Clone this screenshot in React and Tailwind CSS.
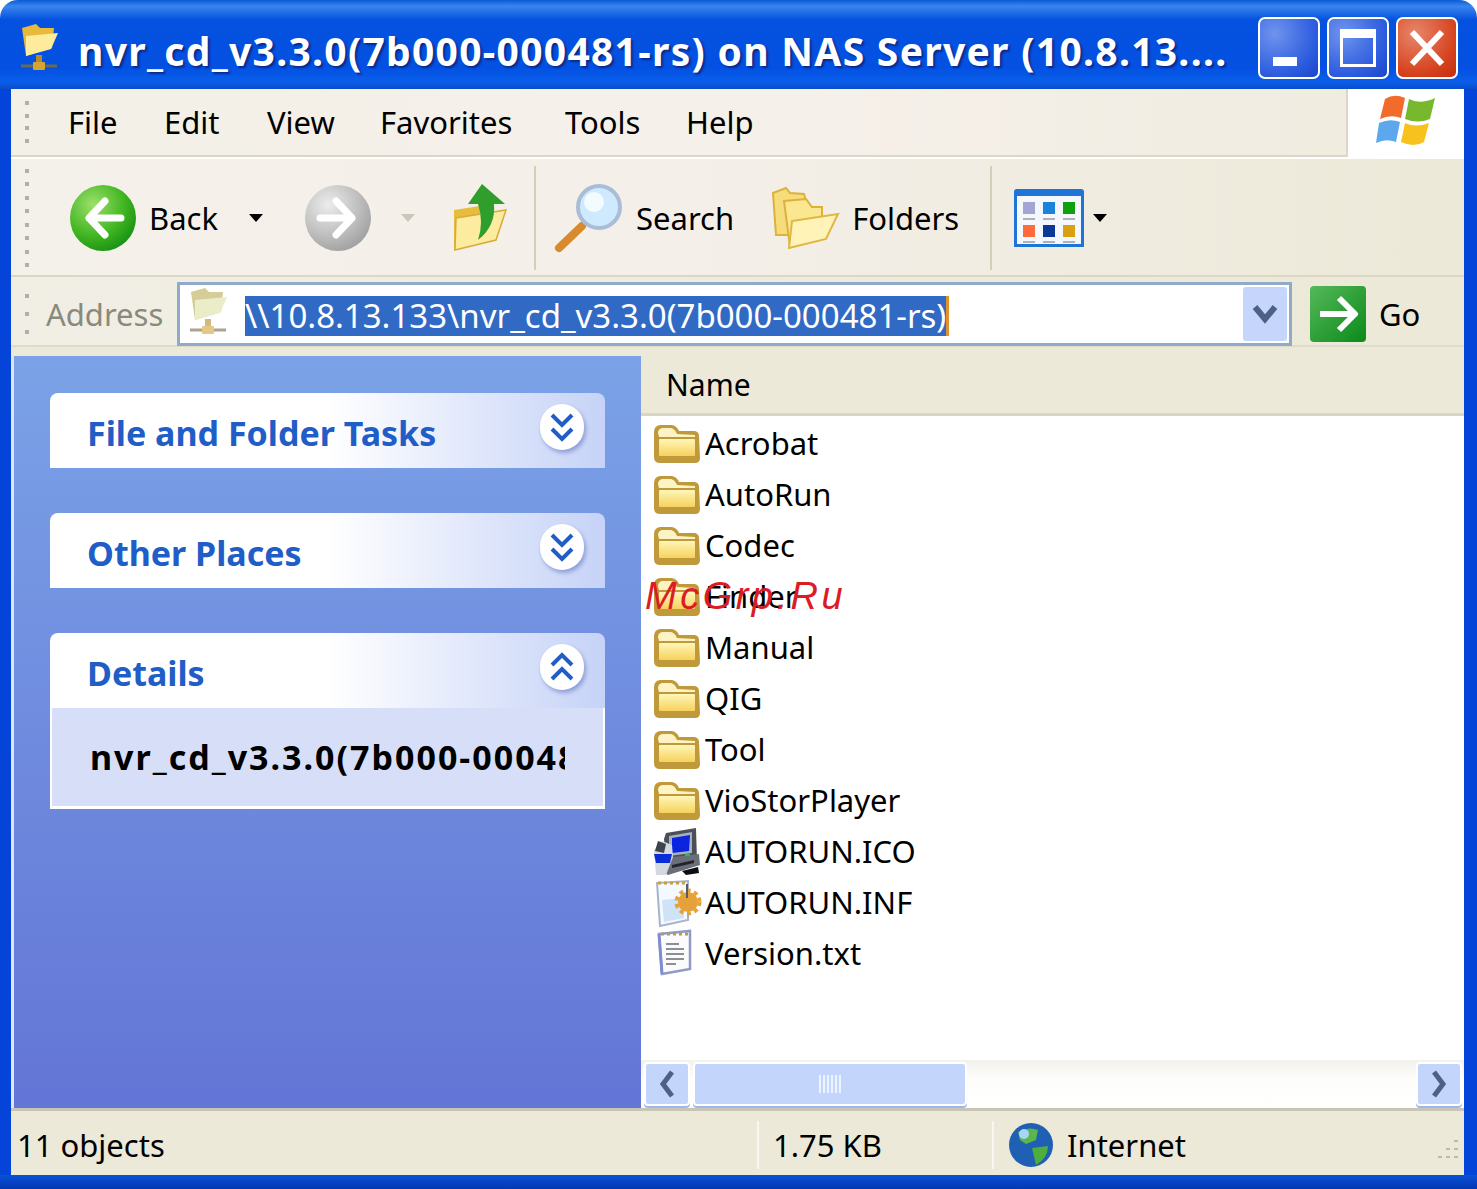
import React from 'react';

const files = ['Acrobat', 'AutoRun', 'Codec', 'Finder', 'Manual', 'QIG', 'Tool', 'VioStorPlayer'];

const menus = [
  { label: 'File', width: 'w-[96px]' },
  { label: 'Edit', width: 'w-[103px]' },
  { label: 'View', width: 'w-[113px]' },
  { label: 'Favorites', width: 'w-[185px]' },
  { label: 'Tools', width: 'w-[121px]' },
  { label: 'Help', width: 'w-[80px]' },
];

function FolderIcon() {
  return (
    <svg width="50" height="44" viewBox="0 0 50 44" className="shrink-0">
      <defs>
        <linearGradient id="fld" x1="0" y1="0" x2="0" y2="1">
          <stop offset="0" stopColor="#fff6b8" />
          <stop offset="1" stopColor="#f6d25c" />
        </linearGradient>
      </defs>
      <path d="M2 10 Q2 4 8 3 L20 3 Q25 4 27 9 L43 9 Q47 10 47 14 L48 36 Q48 41 43 41 L8 41 Q2 41 2 35 Z" fill="#c09a3a" />
      <path d="M6 11 Q6 7 10 6 L19 6 Q23 7 25 12 L43 13 L43 15 L7 15 Z" fill="#fdf3c4" />
      <rect x="7" y="17" width="36" height="17" rx="1" fill="url(#fld)" />
    </svg>
  );
}

function ComputerIcon() {
  return (
    <svg width="50" height="50" viewBox="0 0 50 50" className="shrink-0">
      <path d="M12 12 L14 6 L44 1 L45 34 L14 36 Z" fill="#4b4f58" />
      <path d="M17 9 L40 5 L40 26 L17 29 Z" fill="#a7b0bd" />
      <path d="M20 11 L38 8 L37 24 L20 26 Z" fill="#0a24e0" />
      <path d="M12 31 L47 27 L48 38 L16 48 L10 44 Z" fill="#6a6e76" />
      <path d="M20 38 L42 33 L42 36 L20 41 Z" fill="#22252c" />
      <rect x="33" y="27" width="5" height="2" fill="#21c04a" />
      <path d="M2 23 L10 14 L20 18 L21 30 L14 48 L4 48 Z" fill="#d5d8de" />
      <path d="M2 27 L20 27 L18 36 L4 36 Z" fill="#0b2bd8" />
      <path d="M6 14 L14 17 L12 26 L3 24 Z" fill="#3f434c" />
      <path d="M30 44 L46 40 L47 46 L34 48 Z" fill="#0c0e14" />
    </svg>
  );
}

function InfIcon() {
  return (
    <svg width="50" height="50" viewBox="0 0 50 50" className="shrink-0">
      <path d="M5 5 L36 3 L36 42 L8 48 Z" fill="#f4f8ff" stroke="#a7b3cf" strokeWidth="2" />
      <path d="M10 22 L32 20 L32 40 L12 44 Z" fill="#cfe3f7" />
      <path d="M6 5 H34" stroke="#c5a13f" strokeWidth="3" strokeDasharray="3 3" />
      <circle cx="36" cy="24" r="10" fill="#e6a23a" />
      <circle cx="36" cy="24" r="11.5" fill="none" stroke="#e6a23a" strokeWidth="4" strokeDasharray="4 3.5" />
      <path d="M35 6 V20" stroke="#565b64" strokeWidth="2" />
    </svg>
  );
}

function TxtIcon() {
  return (
    <svg width="50" height="50" viewBox="0 0 50 50" className="shrink-0">
      <path d="M7 5 L38 2 L38 40 L10 45 Z" fill="#fbfbfb" stroke="#8f9ac8" strokeWidth="2.5" />
      <path d="M7 5 L10 45" stroke="#7f8dd0" strokeWidth="3" />
      <path d="M9 5 H36" stroke="#b39a55" strokeWidth="3" strokeDasharray="3 3" />
      <path d="M14 15 H27 M14 20 H32 M14 25 H32 M14 30 H32 M14 35 H24" stroke="#8b8f96" strokeWidth="2" />
    </svg>
  );
}

function NetFolderIcon({ faded }) {
  return (
    <svg width="42" height="52" viewBox="0 0 42 52" className={faded ? 'opacity-60' : ''}>
      <path d="M4 6 L18 2 L22 6 L36 6 L34 26 L8 34 Z" fill={faded ? '#b9ad55' : '#e9b93a'} />
      <path d="M8 14 L40 11 L33 27 L8 34 Z" fill={faded ? '#dfe0a5' : '#ffeb9c'} />
      <rect x="18" y="33" width="6" height="9" fill="#b58b2e" />
      <path d="M3 44 H39" stroke="#6f6a4a" strokeWidth="3" />
      <rect x="15" y="40" width="12" height="8" rx="1" fill="#d5a534" />
    </svg>
  );
}

function RoundArrow({ dir, gray }) {
  return (
    <svg width="68" height="68" viewBox="0 0 68 68">
      <defs>
        <radialGradient id={gray ? 'ga' : 'gg'} cx="0.35" cy="0.3" r="0.8">
          <stop offset="0" stopColor={gray ? '#ececec' : '#9de06a'} />
          <stop offset="0.6" stopColor={gray ? '#bdbdbd' : '#3fb521'} />
          <stop offset="1" stopColor={gray ? '#9b9b9b' : '#138a12'} />
        </radialGradient>
      </defs>
      <circle cx="34" cy="34" r="33" fill={`url(#${gray ? 'ga' : 'gg'})`} />
      <path
        d={dir === 'left' ? 'M36 17 L20 34 L36 51 M20 34 H52' : 'M32 17 L48 34 L32 51 M48 34 H16'}
        fill="none"
        stroke="#fff"
        strokeWidth="7"
        strokeLinecap="round"
        strokeLinejoin="round"
      />
    </svg>
  );
}

function UpIcon() {
  return (
    <svg width="60" height="70" viewBox="0 0 60 70">
      <path d="M4 28 L30 24 L30 60 L4 68 Z" fill="#e8bd3f" />
      <path d="M6 36 L56 28 L46 58 L5 68 Z" fill="#fdeb9f" stroke="#d7ac37" strokeWidth="1.5" />
      <path d="M32 2 L55 22 L44 22 Q46 44 28 58 Q34 40 28 22 L18 22 Z" fill="#2f9e2c" />
    </svg>
  );
}

function SearchIcon() {
  return (
    <svg width="72" height="72" viewBox="0 0 72 72">
      <path d="M5 66 L28 44" stroke="#d88a2c" strokeWidth="8" strokeLinecap="round" />
      <circle cx="45" cy="25" r="21" fill="#cfeaff" stroke="#a9bdd6" strokeWidth="4" />
      <circle cx="40" cy="20" r="10" fill="#f3fbff" />
    </svg>
  );
}

function FoldersIcon() {
  return (
    <svg width="68" height="62" viewBox="0 0 68 62">
      <path d="M1 6 L14 1 L18 6 L32 7 L34 14 L34 48 L4 48 Z" fill="#f7dc7c" stroke="#dcb13c" strokeWidth="2" />
      <path d="M12 14 L34 12 L40 20 L50 20 L50 44 L18 60 Z" fill="#fbe78f" stroke="#dcb13c" strokeWidth="2" />
      <path d="M20 34 L66 27 L54 52 L17 61 Z" fill="#fff3b8" stroke="#dfb744" strokeWidth="2" />
    </svg>
  );
}

function ViewsIcon() {
  const dots = ['#a5a4d6', '#1a84dc', '#0ea00e', '#ff6a3a', '#0b3a96', '#d9a012'];
  return (
    <div className="w-[70px] h-[58px] bg-[#f4f8fd] border-[3px] border-[#1f74d8] border-t-[7px] rounded-t-[3px] grid grid-cols-3 gap-x-[8px] gap-y-[5px] px-[6px] py-[6px]">
      {dots.map((c, i) => (
        <div key={i} className="flex flex-col gap-[4px] items-center">
          <svg width="12" height="12" viewBox="0 0 12 12">
            <rect width="12" height="12" fill={c} />
          </svg>
          <div className="w-[12px] h-[2px] bg-[#aeb2b8]" />
        </div>
      ))}
    </div>
  );
}

function Caret({ light }) {
  return (
    <svg width="16" height="10" viewBox="0 0 16 10">
      <path d="M1 1 H15 L8 9 Z" fill={light ? '#c9c6bb' : '#000'} />
    </svg>
  );
}

function Grip({ h }) {
  return (
    <div className={`w-[4px] ${h} shrink-0 flex flex-col justify-between`}>
      {Array.from({ length: h === 'h-[42px]' ? 4 : h === 'h-[98px]' ? 8 : 3 }).map((_, i) => (
        <div key={i} className="w-[4px] h-[4px] bg-[#b3b0a3]" />
      ))}
    </div>
  );
}

function TaskHeader({ title, up }) {
  return (
    <div className="h-[75px] pl-[37px] pr-[21px] flex justify-between rounded-t-[8px] bg-[linear-gradient(90deg,#fff_50%,#c6d3f7_100%)]">
      <span className="mt-[17px] text-[34px] leading-[46px] font-bold text-[#215dc6]">{title}</span>
      <div className="mt-[11px] w-[44px] h-[46px] rounded-full bg-white shadow-[2px_3px_4px_#8f9fd8] flex items-center justify-center">
        <svg width="26" height="32" viewBox="0 0 26 32">
          <path
            d={up ? 'M3 14 L13 4 L23 14 M3 28 L13 18 L23 28' : 'M3 4 L13 14 L23 4 M3 18 L13 28 L23 18'}
            fill="none"
            stroke="#215dc6"
            strokeWidth="4"
          />
        </svg>
      </div>
    </div>
  );
}

function WinButton({ children, red }) {
  return (
    <div
      className={`w-[62px] h-[62px] rounded-[7px] border-2 border-white flex items-center justify-center ${
        red
          ? 'bg-[radial-gradient(circle_at_30%_25%,#e8866a,#d5401c_70%,#c32f0a)]'
          : 'bg-[radial-gradient(circle_at_25%_25%,#6f93ee,#2a5ade_70%,#1c46c8)]'
      }`}
    >
      {children}
    </div>
  );
}

function FileRow({ icon, name }) {
  return (
    <div className="h-[51px] flex items-center pl-[11px]">
      <div className="w-[53px] shrink-0">{icon}</div>
      <span className="text-[31px] leading-[44px] text-black mt-[-2px]">{name}</span>
    </div>
  );
}

function ScrollButton({ left }) {
  return (
    <div className="w-[46px] h-[44px] rounded-[4px] border-2 border-white bg-[#c4d5fb] shadow-[0_2px_0_#9db8ee] flex items-center justify-center">
      <svg width="18" height="28" viewBox="0 0 18 28">
        <path d={left ? 'M14 2 L5 14 L14 26' : 'M4 2 L13 14 L4 26'} fill="none" stroke="#4d6185" strokeWidth="5" />
      </svg>
    </div>
  );
}

export default function App() {
  return (
    <div className="w-[1477px] h-[1189px] relative overflow-hidden flex flex-col bg-white font-['Noto_Sans','Open_Sans',sans-serif]">
      {/* title bar */}
      <div className="h-[89px] shrink-0 flex items-center pl-[18px] pr-[19px] rounded-t-[18px] bg-[linear-gradient(180deg,#0a5ad8_0%,#3a85ee_7%,#0552e0_22%,#0350e2_75%,#0a5eea_92%,#0a4cc8_100%)]">
        <div className="mt-[6px]"><NetFolderIcon /></div>
        <span className="ml-[18px] mt-[11px] text-[39px] leading-none font-bold text-white tracking-[1.3px] whitespace-nowrap [text-shadow:2px_2px_2px_#0a2a8a]">
          nvr_cd_v3.3.0(7b000-000481-rs) on NAS Server (10.8.13....
        </span>
        <div className="ml-auto flex gap-[7px] mt-[7px]">
          <WinButton>
            <div className="w-[24px] h-[9px] bg-white mt-[26px] mr-[8px]" />
          </WinButton>
          <WinButton>
            <div className="w-[36px] h-[38px] border-[3px] border-t-[9px] border-white" />
          </WinButton>
          <WinButton red>
            <svg width="36" height="38" viewBox="0 0 36 38">
              <path d="M3 3 L33 35 M33 3 L3 35" stroke="#fff" strokeWidth="6" />
            </svg>
          </WinButton>
        </div>
      </div>

      <div className="flex-1 flex flex-col min-h-0 border-l-[11px] border-r-[13px] border-l-[#0544d8] border-r-[#0544d8]">
        {/* menu row */}
        <div className="h-[68px] shrink-0 flex">
          <div className="flex-1 flex items-center pl-[14px] bg-[linear-gradient(90deg,#f3f0e8_0%,#f6f0ea_60%,#f0ece0_100%)] border-b-2 border-r-2 border-[#dcd6c4]">
            <Grip h="h-[42px]" />
            <div className="flex text-[31px] text-black ml-[39px]">
              {menus.map((m) => (
                <span key={m.label} className={m.width}>{m.label}</span>
              ))}
            </div>
          </div>
          <div className="w-[116px] shrink-0 bg-white flex items-center justify-center pb-[7px]">
            <svg width="60" height="56" viewBox="0 0 60 56">
              <path d="M9 7 Q18 1 29 6 L25 26 Q15 22 4 27 Z" fill="#f26b2a" />
              <path d="M33 7 Q44 13 59 6 L54 27 Q42 32 29 27 Z" fill="#77b82f" />
              <path d="M3 31 Q14 26 24 30 L20 50 Q10 46 0 51 Z" fill="#5da8ec" />
              <path d="M29 31 Q40 36 53 31 L48 50 Q38 56 25 50 Z" fill="#f7c21e" />
            </svg>
          </div>
        </div>

        {/* toolbar */}
        <div className="h-[120px] shrink-0 flex items-center pl-[14px] pt-[2px] border-t-2 border-white bg-[linear-gradient(90deg,#f4f1ea_0%,#f4efe9_45%,#ece9d8_100%)] border-b-2 border-b-[#dcd6c4]">
          <Grip h="h-[98px]" />
          <div className="ml-[40px] flex items-center w-[465px]">
            <RoundArrow dir="left" />
            <span className="ml-[12px] text-[31px] text-black">Back</span>
            <div className="ml-[30px]"><Caret /></div>
            <div className="ml-[40px]"><RoundArrow dir="right" gray /></div>
            <div className="ml-[28px]"><Caret light /></div>
            <div className="ml-[34px] mt-[-2px]"><UpIcon /></div>
          </div>
          <div className="w-[2px] h-[104px] bg-[#d5cfb9]" />
          <div className="flex items-center ml-[18px] w-[436px]">
            <SearchIcon />
            <span className="ml-[10px] text-[31px] text-black">Search</span>
            <div className="ml-[38px]"><FoldersIcon /></div>
            <span className="ml-[12px] text-[31px] text-black">Folders</span>
          </div>
          <div className="w-[2px] h-[104px] bg-[#d5cfb9]" />
          <div className="ml-[22px] flex items-center gap-[8px]">
            <ViewsIcon />
            <Caret />
          </div>
        </div>

        {/* address bar */}
        <div className="h-[70px] shrink-0 flex items-center pl-[14px] pt-[6px] bg-[linear-gradient(90deg,#f1eee5_0%,#ece9d8_100%)] border-b-2 border-[#e0dccb]">
          <Grip h="h-[40px]" />
          <span className="ml-[17px] w-[131px] shrink-0 text-[31px] text-[#8a8a7c]">Address</span>
          <div className="w-[1115px] h-[64px] shrink-0 flex items-center border-[3px] border-[#8fabc9] bg-white">
            <div className="ml-[7px] mt-[-4px]"><NetFolderIcon faded /></div>
            <span className="ml-[16px] mt-[4px] bg-[#316ac5] text-white text-[33px] leading-[40px] border-r-[3px] border-[#e0912a] whitespace-nowrap">
              \\10.8.13.133\nvr_cd_v3.3.0(7b000-000481-rs)
            </span>
            <div className="ml-auto mr-[2px] w-[44px] h-[54px] rounded-[3px] bg-[#c5d5fb] flex items-center justify-center">
              <svg width="26" height="20" viewBox="0 0 26 20">
                <path d="M3 3 L13 15 L23 3" fill="none" stroke="#4d6185" strokeWidth="6" />
              </svg>
            </div>
          </div>
          <div className="ml-[18px] w-[56px] h-[56px] rounded-[4px] bg-[linear-gradient(135deg,#56b85a,#0a8a1a)] flex items-center justify-center">
            <svg width="42" height="40" viewBox="0 0 42 40">
              <path d="M22 4 L38 20 L22 36 M38 20 H3" fill="none" stroke="#fff" strokeWidth="6" strokeLinejoin="round" />
            </svg>
          </div>
          <span className="ml-[13px] text-[31px] text-black">Go</span>
        </div>

        {/* main */}
        <div className="flex-1 min-h-0 flex bg-[#ece9d8] pt-[9px]">
          <div className="w-[630px] shrink-0 border-l-[3px] border-[#dbe6fa] flex flex-col gap-[45px] px-[36px] pt-[37px] bg-[linear-gradient(180deg,#7ba2e7,#6375d6)]">
            <div>
              <TaskHeader title="File and Folder Tasks" />
            </div>
            <div>
              <TaskHeader title="Other Places" />
            </div>
            <div>
              <TaskHeader title="Details" up />
              <div className="h-[101px] bg-[#d6dff7] border-x-2 border-b-[3px] border-white pl-[38px] pr-[38px] pt-[26px] overflow-hidden">
                <div className="overflow-hidden whitespace-nowrap text-[34px] leading-[46px] font-bold text-black tracking-[2px]">
                  nvr_cd_v3.3.0(7b000-00048
                </div>
              </div>
            </div>
          </div>

          <div className="flex-1 min-w-0 flex flex-col bg-white">
            <div className="h-[60px] shrink-0 pl-[25px] flex items-center bg-[#ece9d8] border-b-[3px] border-[#dad6c6] text-[30px] text-black">
              Name
            </div>
            <div className="flex-1 min-h-0 pt-[2px]">
              {files.map((f) => (
                <FileRow key={f} icon={<FolderIcon />} name={f} />
              ))}
              <FileRow icon={<ComputerIcon />} name="AUTORUN.ICO" />
              <FileRow icon={<InfIcon />} name="AUTORUN.INF" />
              <FileRow icon={<TxtIcon />} name="Version.txt" />
            </div>
            <div className="h-[48px] shrink-0 flex items-center bg-[linear-gradient(180deg,#f3f1ec,#fdfdfb_40%,#fff)] pl-[3px] pr-[2px] gap-[3px]">
              <ScrollButton left />
              <div className="w-[274px] h-[44px] rounded-[4px] border-2 border-white bg-[#c4d5fb] shadow-[0_2px_0_#9db8ee] flex items-center justify-center gap-[2px]">
                {[0, 1, 2, 3, 4, 5].map((i) => (
                  <div key={i} className="w-[2px] h-[18px] bg-[#eef4ff]" />
                ))}
              </div>
              <div className="flex-1" />
              <ScrollButton />
            </div>
          </div>
        </div>

        {/* status bar */}
        <div className="h-[67px] shrink-0 flex items-center relative border-t-[3px] border-[#c9c5b4] bg-[#ece9d8] text-[31px] text-black pt-[4px]">
          <span className="w-[746px] pl-[6px] shrink-0">11 objects</span>
          <div className="w-[2px] h-[48px] bg-[#f8f6ee]" />
          <span className="w-[233px] pl-[14px] shrink-0">1.75 KB</span>
          <div className="w-[2px] h-[48px] bg-[#f8f6ee]" />
          <svg width="46" height="46" viewBox="0 0 46 46" className="ml-[14px]">
            <circle cx="23" cy="23" r="22" fill="#1f5fb4" />
            <path d="M10 10 Q20 4 30 8 L28 18 L18 22 L12 18 Z" fill="#5ab84a" />
            <path d="M24 26 L40 24 Q40 36 28 43 Z" fill="#4cae3c" />
            <circle cx="16" cy="12" r="5" fill="#a8d4f5" />
          </svg>
          <span className="ml-[13px]">Internet</span>
          <svg width="28" height="28" viewBox="0 0 28 28" className="ml-auto mr-[4px] mt-[14px]">
            <path d="M24 2 V4 M24 10 V12 M16 10 V12 M24 18 V20 M16 18 V20 M8 18 V20" stroke="#bdb9a8" strokeWidth="4" />
          </svg>
        </div>
      </div>

      {/* bottom window edge */}
      <div className="h-[14px] shrink-0 bg-[linear-gradient(180deg,#0a50d8,#0338b0)]" />

      {/* watermark */}
      <span className="absolute left-[645px] top-[571px] text-[38px] leading-[50px] italic text-[#dc1c24] tracking-[3.5px] font-['Liberation_Sans',sans-serif]">
        McGrp.Ru
      </span>
    </div>
  );
}
